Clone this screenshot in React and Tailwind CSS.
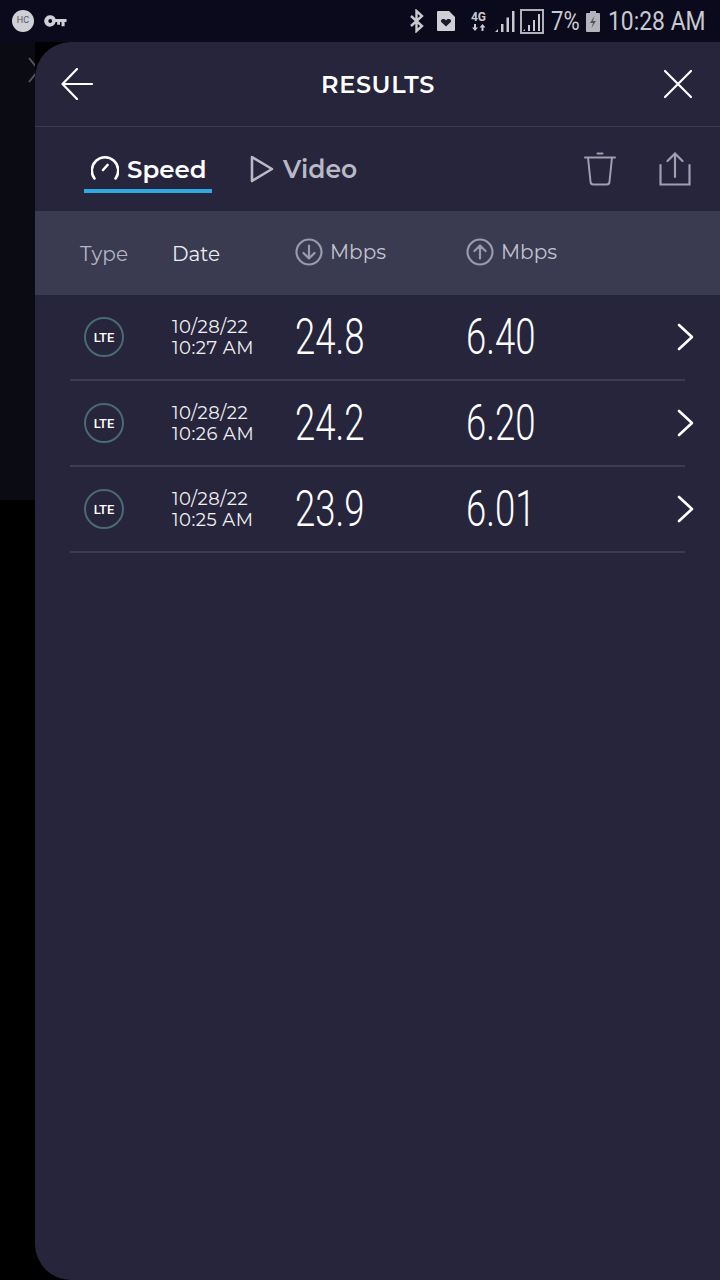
import React from 'react';

const gotham = "font-['Montserrat','Lato','Noto_Sans',sans-serif]";

const results = [
  { date: '10/28/22', time: '10:27 AM', down: '24.8', up: '6.40' },
  { date: '10/28/22', time: '10:26 AM', down: '24.2', up: '6.20' },
  { date: '10/28/22', time: '10:25 AM', down: '23.9', up: '6.01' },
];

// Status bar
const StatusBar = () => (
  <div className="h-[42px] bg-[#0a0a1c] flex items-center justify-between pl-[12px] pr-[15px] shrink-0">
    <div className="flex items-center gap-[10px]">
      <div className="w-[22px] h-[22px] rounded-full bg-[#cfcfd6] flex items-center justify-center text-[9px] text-[#55555f] font-['Roboto',sans-serif]">
        HC
      </div>
      <svg width="23" height="14" viewBox="0 0 24 14" fill="#cfcfd6">
        <path fillRule="evenodd" d="M6.5 1a6 6 0 0 1 5.6 3.8H23.500V8h-2v4.500h-3.200V8h-1.600v3h-3V8h-1.600A6 6 0 1 1 6.500 1zm0 4a2 2 0 1 0 0 4 2 2 0 0 0 0-4z" />
      </svg>
    </div>
    <div className="flex items-center text-[#c9c9d0] font-['Roboto',sans-serif]">
      <svg width="16" height="24" viewBox="0 0 16 24" fill="none" stroke="#c9c9d0" strokeWidth="2.400" className="mr-[11px]">
        <path d="M2 7l11 10-5.500 5V2L13 7 2 17" />
      </svg>
      <svg width="20" height="22" viewBox="0 0 20 22" className="mr-[14px]">
        <path d="M1 2a1 1 0 0 1 1-1h11l6 6v13a1 1 0 0 1-1 1H2a1 1 0 0 1-1-1z" fill="#cfcfd6" />
        <path d="M10 16.500l-4.500-4.300c-2-2.200 1.800-5 4.500-2 2.700-3 6.500-.2 4.500 2z" fill="#1a1a2a" />
      </svg>
      <div className="w-[17px] mr-[7px] flex flex-col items-center">
        <span className="text-[12px] leading-[12px] font-bold">4G</span>
        <svg width="14" height="7" viewBox="0 0 14 7" fill="#c9c9d0" className="mt-[1px]">
          <path d="M3 7L0 3.500h2V0h2v3.500h2zM10.500 0l3 3.500h-2V7h-2V3.500h-2z" />
        </svg>
      </div>
      <svg width="22" height="24" viewBox="0 0 22 24" fill="#c9c9d0" className="mr-[4px]">
        <path d="M1 23l3-3v3zM7 15h2.500v8H7zM12.500 8.500H15V23h-2.500zM18 2h2.500v21H18z" />
      </svg>
      <div className="w-[24px] h-[25px] border-2 border-[#b0b0b8] flex items-end justify-center mr-[7px]">
        <svg width="20" height="19" viewBox="0 0 20 19" fill="#c9c9d0">
          <path d="M1 18l2-2v2zM6 12h2v6H6zM11 7h2v11h-2zM16 1h2v17h-2z" />
        </svg>
      </div>
      <span className="text-[26px] leading-none mr-[7px] scale-x-[.85] origin-left w-[28px] whitespace-nowrap">7%</span>
      <svg width="14" height="22" viewBox="0 0 14 22" className="mr-[8px]">
        <path d="M4 1h6v2h3a1 1 0 0 1 1 1v17a1 1 0 0 1-1 1H1a1 1 0 0 1-1-1V4a1 1 0 0 1 1-1h3z" fill="#b4b4bc" />
        <path d="M8.500 6L4 13h3l-1.500 5L10 11H7z" fill="#55555f" />
      </svg>
      <span className="text-[26px] leading-none w-[97px] scale-x-[.88] origin-left whitespace-nowrap">10:28 AM</span>
    </div>
  </div>
);

const CircleArrow = ({ up }) => (
  <svg width="28" height="28" viewBox="0 0 28 28" fill="none" stroke="#9a9aac" strokeWidth="2.200" strokeLinecap="round" strokeLinejoin="round">
    <circle cx="14" cy="14" r="12.500" />
    {up ? <path d="M14 20.500V8M8.500 13L14 7.500 19.500 13" /> : <path d="M14 7.500V20M8.500 15l5.500 5.500 5.500-5.500" />}
  </svg>
);

const Row = ({ item }) => (
  <div className={`mx-[35px] h-[86px] pl-[14px] border-b-2 border-[#3c3c4f] grid grid-cols-[88px_123px_171px_1fr] items-center ${gotham}`}>
    <div className="w-[40px] h-[40px] rounded-full border-2 border-[#4a6a72] flex items-center justify-center pt-[1px] text-[13px] font-medium text-white font-['Roboto',sans-serif]">
      LTE
    </div>
    <div className="text-[18px] tracking-[.5px] leading-[21px] text-[#f0f0f4] pt-[1px] whitespace-nowrap">
      <div>{item.date}</div>
      <div>{item.time}</div>
    </div>
    <div className="text-[50px] leading-none font-light text-white font-['Roboto',sans-serif] scale-x-[.73] origin-left whitespace-nowrap">
      {item.down}
    </div>
    <div className="flex items-center justify-between -mr-[9px]">
      <div className="text-[50px] leading-none font-light text-white font-['Roboto',sans-serif] scale-x-[.73] origin-left whitespace-nowrap">
        {item.up}
      </div>
      <svg width="18" height="28" viewBox="0 0 18 28" fill="none" stroke="white" strokeWidth="2.600" strokeLinecap="round" strokeLinejoin="round">
        <path d="M3 2l13 12L3 26" />
      </svg>
    </div>
  </div>
);

export default function App() {
  return (
    <div className="w-[720px] h-[1280px] flex flex-col bg-black overflow-hidden">
      <StatusBar />
      <div className="flex-1 flex">
        {/* Ecran derriere le panneau */}
        <div className="w-[35px] flex flex-col shrink-0">
          <div className="h-[458px] bg-[#0b0b14] pt-[14px] pl-[27px]">
            <svg width="8" height="28" viewBox="0 0 8 28" fill="none" stroke="#55555c" strokeWidth="2">
              <path d="M2 2l8 10M2 26l8-10" />
            </svg>
          </div>
          <div className="flex-1 bg-black" />
        </div>

        {/* Panneau resultats */}
        <div className="flex-1 bg-[#26253b] rounded-tl-[36px] rounded-bl-[36px] overflow-hidden">
          <div className="h-[85px] border-b border-[#3a3a4d] flex items-center justify-between pl-[26px] pr-[27px]">
            <svg width="32" height="32" viewBox="0 0 32 32" fill="none" stroke="white" strokeWidth="2.200" strokeLinecap="round" strokeLinejoin="round">
              <path d="M31 16H1.500M16 1L1.500 16 16 31" />
            </svg>
            <h1 className={`text-[24px] font-semibold text-white tracking-[.6px] pt-[2px] ${gotham}`}>RESULTS</h1>
            <svg width="30" height="30" viewBox="0 0 30 30" fill="none" stroke="white" strokeWidth="2.200" strokeLinecap="round">
              <path d="M2 2l26 26M28 2L2 28" />
            </svg>
          </div>

          <div className={`h-[84px] flex pl-[49px] pr-[29px] ${gotham}`}>
            <div className="w-[128px] h-[66px] border-b-4 border-[#2fa9e2] flex items-center pl-[7px] pt-[22px] gap-[8px] text-[24.500px] font-semibold text-white">
              <svg width="28" height="24" viewBox="0 0 28 24" fill="none" stroke="white" strokeWidth="2.600" strokeLinecap="round" className="-mt-[3px]">
                <path d="M3.500 22.500A13.200 13.200 0 1 1 24.500 22.500M12 14l4.500-5" />
              </svg>
              Speed
            </div>
            <div className="flex items-center h-[66px] pt-[20px] ml-[38px] gap-[9px] text-[25px] font-semibold text-[#b9b9c6]">
              <svg width="24" height="28" viewBox="0 0 24 28" fill="none" stroke="#b9b9c6" strokeWidth="2.600" strokeLinejoin="round" className="-mt-[2px]">
                <path d="M2 2l20 12L2 26z" />
              </svg>
              Video
            </div>
            <div className="ml-auto flex items-start pt-[25px] gap-[43px]">
              <svg width="32" height="34" viewBox="0 0 32 34" fill="none" stroke="#9f9fb0" strokeWidth="2" strokeLinecap="round" strokeLinejoin="round">
                <path d="M1 5.500h30M13.500 1.500h5M4 5.500l2.500 24a3 3 0 0 0 3 3h13a3 3 0 0 0 3-3l2.500-24" />
              </svg>
              <svg width="32" height="34" viewBox="0 0 32 34" fill="none" stroke="#9f9fb0" strokeWidth="2.200" strokeLinecap="round">
                <path d="M16 25V2M8.500 9L16 1.500 23.500 9M1.500 13v19.500h29V13" />
              </svg>
            </div>
          </div>

          <div className={`h-[84px] bg-[#3a3b50] pl-[45px] grid grid-cols-[92px_123px_171px_1fr] items-center text-[20px] ${gotham}`}>
            <span className="text-[#b5b5c4] pt-[2px]">Type</span>
            <span className="text-[#ededf2] pt-[2px]">Date</span>
            <div className="flex items-center gap-[7px] -mt-[2px] text-[#c3c3d0]">
              <CircleArrow />
              <span>Mbps</span>
            </div>
            <div className="flex items-center gap-[7px] -mt-[2px] text-[#c3c3d0]">
              <CircleArrow up />
              <span>Mbps</span>
            </div>
          </div>

          {results.map((item) => (
            <Row key={item.time} item={item} />
          ))}
        </div>
      </div>
    </div>
  );
}
